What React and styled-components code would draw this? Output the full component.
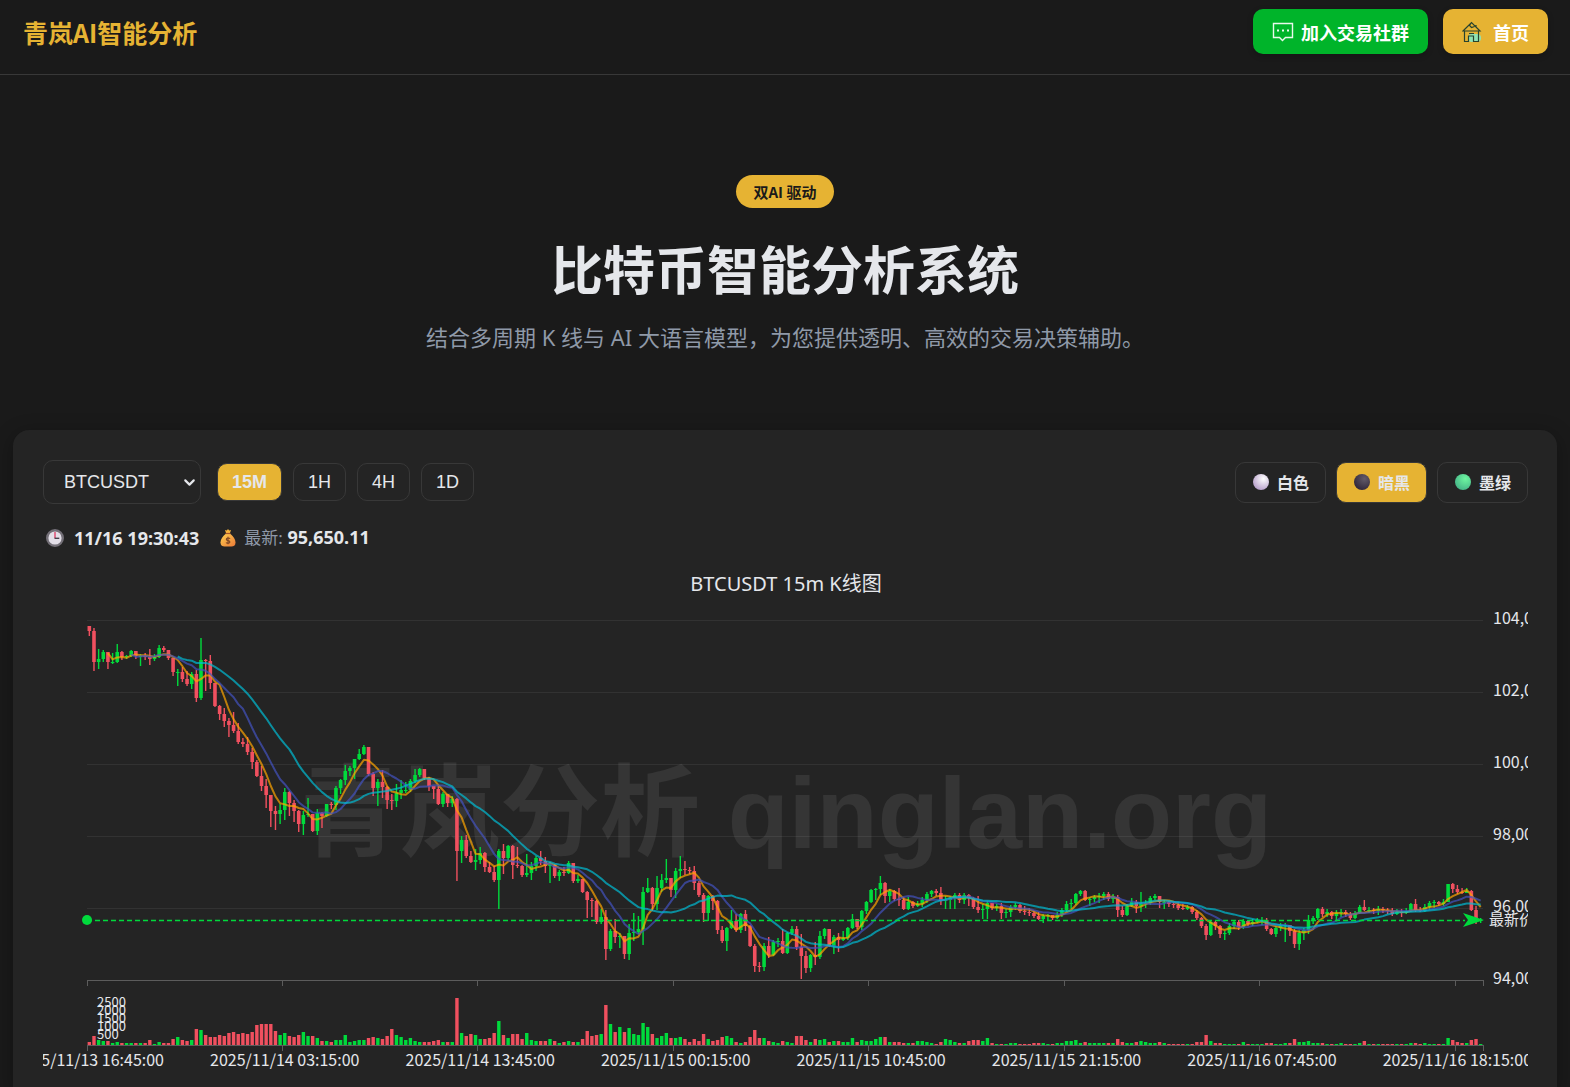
import React, {useState} from 'react'
import styled, {createGlobalStyle} from 'styled-components'
import {ChevronDown} from 'lucide-react'

const gold = '#e6b333'
const green = '#00da3c'
const red = '#f0505f'
const ink = '#e5e7eb'
const muted = '#8f99a8'
const line = '#383838'
const sans = '"Noto Sans", "Noto Sans CJK SC", sans-serif'
const cjk = '"Noto Sans CJK SC", sans-serif'
const arial = '"Liberation Sans", "Noto Sans CJK SC", sans-serif'

const GlobalStyle = createGlobalStyle`
  * {
    box-sizing: border-box;
  }
  body {
    margin: 0;
    background: #1a1a1a;
    color: ${ink};
    font-family: ${sans};
  }
`

const Header = styled.header`
  display: flex;
  align-items: center;
  justify-content: space-between;
  padding: 9px 22px 20px 23px;
  border-bottom: 1px solid ${line};
`
const Logo = styled.div`
  color: ${gold};
  font-family: ${cjk};
  font-size: 25px;
  line-height: 36px;
  font-weight: 700;
`
const Nav = styled.nav`
  display: flex;
  gap: 15px;
`
const NavLink = styled.a`
  display: flex;
  align-items: center;
  gap: ${({$gap}) => $gap}px;
  height: 45px;
  padding: 0 19px;
  border-radius: 10px;
  background: ${({$bg}) => $bg};
  color: #fff;
  font-size: 18px;
  font-weight: 700;
  text-decoration: none;
  box-shadow: 0 2px 6px rgba(0, 0, 0, 0.2);
`

const Hero = styled.section`
  display: flex;
  flex-direction: column;
  align-items: center;
  padding: 100px 20px 77px;
  text-align: center;
`
const Badge = styled.span`
  padding: 0 18px;
  border-radius: 20px;
  background: ${gold};
  color: #1a1a1a;
  font-family: ${cjk};
  font-size: 15px;
  line-height: 33px;
  font-weight: 700;
`
const Title = styled.h1`
  margin: 24px 0 0;
  font-size: 52px;
  line-height: 76px;
  font-weight: 700;
`
const Subtitle = styled.p`
  margin: 13px 0 0;
  color: ${muted};
  font-size: 22px;
  line-height: 32px;
`

const Card = styled.main`
  margin: 0 13px;
  padding: 30px 29px 0 30px;
  border-radius: 16px 16px 0 0;
  background: #242424;
  box-shadow: 0 4px 20px rgba(0, 0, 0, 0.3);
`
const Toolbar = styled.div`
  display: flex;
  align-items: center;
  justify-content: space-between;
`
const Controls = styled.div`
  display: flex;
  align-items: center;
  gap: 16px;
`
const Group = styled.div`
  display: flex;
  gap: ${({$gap}) => $gap}px;
`
const SelectBox = styled.div`
  position: relative;
  color: ${ink};

  svg {
    position: absolute;
    top: 14px;
    right: 3px;
    pointer-events: none;
  }
`
const SymbolSelect = styled.select`
  display: block;
  appearance: none;
  width: 158px;
  height: 44px;
  padding: 0 20px;
  border: 1px solid ${line};
  border-radius: 10px;
  background: #242424;
  color: ${ink};
  font-family: ${arial};
  font-size: 18px;
`
const IntervalButton = styled.button`
  height: 38px;
  padding: 0 14px;
  border: 1px solid ${line};
  border-radius: 10px;
  background: ${({$active}) => $active ? gold : 'transparent'};
  color: ${ink};
  font-family: ${arial};
  font-size: 18px;
  font-weight: ${({$active}) => $active ? 700 : 400};
`
const ThemeButton = styled.button`
  display: flex;
  align-items: center;
  gap: 8px;
  height: 41px;
  padding: 0 16px 0 17px;
  border: 1px solid ${line};
  border-radius: 10px;
  background: ${({$active}) => $active ? gold : 'transparent'};
  color: ${ink};
  font-family: ${arial};
  font-size: 16px;
  font-weight: 700;
`
const Status = styled.div`
  display: flex;
  align-items: center;
  gap: 21px;
  margin-top: 20px;
  padding-left: 3px;
  font-size: 18px;
  line-height: 26px;
`
const StatusItem = styled.span`
  display: flex;
  align-items: center;
  gap: ${({$gap}) => $gap}px;
`
const Label = styled.span`
  color: ${muted};
  font-size: 17px;
`
const ChartSvg = styled.svg`
  display: block;
  width: 100%;
  margin-top: 12px;
  overflow: hidden;
  font-family: ${cjk};
`

// [close, high, low, volume] on the plot's own scale, 0 is the 104,000 line and 360 the 94,000 one
const candles = [
  [11,6,16,3],[42,8,51,9],[39,29,49,5],[32,30,42,4],[42,32,49,4],[42,33,44,2],[32,24,43,3],[37,31,40,2],[36,35,39,2],[31,30,37,2],
  [36,31,39,2],[36,34,46,2],[37,33,40,2],[39,29,45,5],[37,34,41,1],[28,25,38,3],[30,26,32,2],[38,30,40,2],[52,38,56,6],[52,49,66,8],
  [59,47,62,5],[64,51,66,4],[54,52,69,5],[78,50,82,16],[40,18,80,15],[41,39,71,10],[63,35,69,8],[86,63,87,8],[94,85,100,10],[101,88,107,9],
  [105,98,117,12],[111,92,113,13],[122,103,124,11],[124,118,127,12],[132,117,135,11],[142,128,149,13],[156,140,157,20],[166,146,171,21],[175,159,188,21],[191,175,207,21],
  [194,186,210,14],[190,184,204,10],[172,168,200,12],[183,171,196,9],[191,180,202,8],[204,190,212,10],[195,191,215,13],[194,178,197,9],[211,194,212,9],[193,189,215,7],
  [196,192,208,4],[184,184,197,4],[185,182,189,3],[168,166,190,5],[160,159,174,5],[151,145,165,10],[148,146,156,3],[139,139,159,4],[134,129,140,5],[127,125,135,5],
  [154,127,156,7],[168,152,176,8],[162,159,186,7],[167,150,178,6],[180,166,189,9],[181,174,190,16],[173,164,187,10],[170,160,179,8],[170,162,173,5],[161,159,172,7],
  [155,149,163,4],[149,148,157,3],[158,149,160,3],[166,157,171,3],[169,166,179,4],[184,166,185,5],[174,172,187,3],[183,174,187,3],[179,176,187,3],[231,178,261,47],
  [220,216,243,12],[236,215,238,9],[242,231,243,11],[240,229,250,10],[233,227,244,6],[247,232,252,6],[252,242,253,7],[260,246,262,12],[231,229,289,24],[238,224,254,10],
  [226,225,240,7],[245,225,259,11],[246,227,248,11],[255,245,257,6],[253,234,257,12],[246,242,260,5],[238,236,251,4],[241,231,245,4],[246,237,253,4],[245,242,263,6],
  [256,244,258,4],[252,250,261,2],[253,247,256,3],[243,241,254,4],[261,243,263,3],[259,255,263,3],[272,259,273,6],[280,271,298,14],[281,278,297,9],[302,280,304,10],
  [297,289,304,11],[329,290,340,40],[311,309,331,21],[317,299,323,13],[316,313,328,18],[334,316,339,13],[313,304,340,17],[312,293,321,11],[309,296,314,10],[272,267,325,22],
  [268,258,273,18],[284,267,291,11],[268,256,290,7],[260,254,272,9],[258,239,263,12],[270,258,277,7],[251,248,278,7],[249,236,258,8],[250,241,255,6],[251,247,254,3],
  [263,246,270,6],[275,261,277,4],[293,273,302,11],[276,275,301,6],[281,275,290,4],[310,280,314,5],[321,306,323,8],[308,307,331,9],[301,290,309,7],[310,294,312,3],
  [294,293,313,2],[306,290,311,3],[326,305,327,8],[346,324,352,15],[347,342,352,7],[326,323,351,7],[335,317,338,4],[322,320,336,3],[321,318,327,2],[333,309,334,4],
  [313,312,334,3],[309,306,315,2],[327,306,330,9],[336,314,359,9],[348,331,353,5],[335,334,352,3],[337,322,345,6],[316,311,339,5],[309,308,319,6],[326,309,327,3],
  [317,315,334,4],[320,313,332,4],[318,311,321,3],[308,307,320,3],[299,294,309,7],[307,299,309,3],[291,290,310,5],[282,281,294,4],[270,269,283,4],[269,268,280,6],
  [263,256,275,8],[276,262,283,8],[271,269,282,3],[279,270,281,3],[280,268,286,3],[289,277,290,2],[282,277,290,2],[286,281,288,2],[284,281,287,4],[280,277,287,4],
  [274,272,283,3],[271,270,277,2],[273,269,276,1],[281,267,285,3],[280,276,289,6],[278,276,289,5],[275,273,289,3],[280,273,283,2],[275,273,284,2],[278,274,286,4],
  [287,277,289,5],[290,276,293,5],[289,284,299,4],[283,281,299,7],[288,283,290,2],[286,284,291,1],[293,283,299,1],[292,289,298,1],[287,285,297,2],[285,283,290,2],
  [291,284,293,1],[292,286,295,1],[293,288,296,1],[296,291,298,2],[299,292,300,2],[296,294,303,2],[295,294,300,1],[298,295,300,1],[295,292,299,2],[290,288,297,2],
  [284,281,292,4],[283,279,289,4],[274,273,285,5],[271,270,276,2],[280,270,281,3],[279,277,286,2],[277,275,282,2],[276,273,283,2],[274,272,280,2],[279,272,281,2],
  [277,274,283,2],[290,275,297,6],[295,286,297,3],[286,284,296,2],[282,278,287,2],[286,280,293,3],[284,272,292,4],[283,280,288,3],[278,276,285,2],[276,274,280,2],
  [282,276,288,3],[282,280,289,2],[284,281,287,1],[285,282,288,1],[288,282,290,1],[289,284,290,1],[287,285,290,1],[292,286,294,1],[298,290,300,3],[306,297,308,3],
  [315,304,320,10],[302,300,316,4],[306,301,310,2],[314,305,318,2],[313,311,320,1],[306,303,315,1],[302,300,309,1],[307,300,310,1],[301,299,309,3],[304,300,306,1],
  [302,299,306,1],[300,298,303,1],[300,297,305,1],[309,298,311,2],[314,308,315,2],[308,306,317,1],[306,303,311,1],[305,303,322,2],[311,306,316,2],[324,309,328,6],
  [313,310,330,3],[310,308,320,3],[300,295,314,4],[298,296,304,2],[289,288,300,2],[294,287,297,2],[292,289,297,1],[296,291,299,1],[293,290,300,1],[292,289,297,2],
  [294,290,297,1],[298,292,300,1],[293,291,299,1],[287,285,294,2],[290,280,291,4],[290,287,293,1],[291,288,294,1],[289,286,295,1],[290,287,293,1],[291,288,294,1],
  [294,288,296,1],[292,289,295,1],[293,289,297,1],[291,288,294,1],[284,283,292,2],[290,279,292,2],[291,287,292,1],[287,284,292,2],[283,281,290,1],[282,280,288,1],
  [284,281,286,1],[282,279,286,1],[264,264,281,7],[269,263,273,5],[272,265,274,3],[273,268,274,2],[271,268,273,2],[290,270,291,5],[301,286,304,6],[300,298,303,1]
]

const plotWidth = 1396
const step = plotWidth / candles.length
const centre = i => (i + 0.5) * step
const openOf = i => i === 0 ? 6 : candles[i - 1][0]
const isUp = i => candles[i][0] <= openOf(i)

const average = n => candles
  .map((_, i) => i < n - 1 ? null : [
    centre(i),
    candles.slice(i - n + 1, i + 1).reduce((sum, c) => sum + c[0], 0) / n
  ])
  .filter(Boolean)
  .map(([x, y]) => `${x.toFixed(1)},${y.toFixed(1)}`)
  .join(' ')

const averages = [
  {n: 5, color: '#ffa500'},
  {n: 10, color: '#4353c0'},
  {n: 20, color: '#00bcd4'}
]
const prices = ['104,000', '102,000', '100,000', '98,000', '96,000', '94,000']
const volumes = ['500', '1000', '1500', '2000', '2500']
const times = [
  '2025/11/13 16:45:00',
  '2025/11/14 03:15:00',
  '2025/11/14 13:45:00',
  '2025/11/15 00:15:00',
  '2025/11/15 10:45:00',
  '2025/11/15 21:15:00',
  '2025/11/16 07:45:00',
  '2025/11/16 18:15:00'
]

const Axis = ({y}) => (
  <g stroke="#5c5c5c" shapeRendering="crispEdges">
    <path d={`M0 ${y}H${plotWidth}M${plotWidth} ${y}v6`} fill="none" />
    {times.map((t, i) => (
      <line key={t} x1={i * 42 * step} x2={i * 42 * step} y1={y} y2={y + 6} />
    ))}
  </g>
)

const Chart = () => (
  <ChartSvg viewBox="0 0 1485 525" role="img" aria-label="BTCUSDT 15m K线图">
    <text x="743" y="28" textAnchor="middle" fontSize="20" fontFamily={sans} fill={ink}>BTCUSDT 15m K线图</text>
    <g transform="translate(44 57)">
      {prices.slice(0, 5).map((p, i) => (
        <line key={p} x1="0" x2={plotWidth} y1={i * 72} y2={i * 72} stroke="#323232" shapeRendering="crispEdges" />
      ))}
      <text x="699" y="228" textAnchor="middle" fontSize="100" fontWeight="700" fontFamily={arial} fill="#fff" fillOpacity="0.08">
        青岚分析 qinglan.org
      </text>
      {candles.map(([close, high, low], i) => {
        const open = openOf(i)
        const top = Math.min(open, close)
        const color = isUp(i) ? green : red
        return (
          <g key={i} fill={color}>
            <rect x={centre(i) - 0.7} y={high} width="1.4" height={low - high} />
            <rect x={centre(i) - 1.8} y={top} width="3.6" height={Math.max(1, Math.abs(open - close))} />
          </g>
        )
      })}
      {averages.map(({n, color}) => (
        <polyline key={n} points={average(n)} fill="none" stroke={color} strokeWidth="2" strokeLinejoin="round" opacity="0.7" />
      ))}
      <path d="M0 300.500H1378" stroke={green} strokeWidth="1.300" strokeDasharray="5 3" />
      <circle cx="0" cy="300" r="5" fill={green} />
      <path d="M1376 293l21 7-21 7 5-7z" fill={green} />
      <Axis y={360} />
      {prices.map((p, i) => (
        <text key={p} x="1406" y={i * 72 + 4} fontSize="16" fill={ink}>{p}</text>
      ))}
      <text x="1402" y="305" fontSize="15" fill={ink}>最新价</text>
      {candles.map((c, i) => (
        <rect key={i} x={centre(i) - 1.7} y={425 - c[3]} width="3.4" height={c[3]} fill={isUp(i) ? green : red} />
      ))}
      <Axis y={425} />
      {volumes.map((v, i) => (
        <text key={v} x="10" y={419 - i * 8} fontSize="13" fill={ink}>{v}</text>
      ))}
      {times.map((t, i) => (
        <text key={t} x={centre(i * 42)} y="446" textAnchor="middle" fontSize="16" fill={ink}>{t}</text>
      ))}
    </g>
  </ChartSvg>
)

const ChatIcon = () => (
  <svg width="22" height="20" viewBox="0 0 22 20" fill="none" stroke="#e9f9ec" strokeWidth="1.4" aria-hidden="true">
    <path d="M1.5 1.5h19v14h-7l-3 3-3-3h-6z" />
    <path d="M5 8.500h2M10 8.500h2M15 8.500h2" strokeWidth="1.8" />
  </svg>
)

const HouseIcon = () => (
  <svg width="20" height="22" viewBox="0 0 20 22" fill="none" aria-hidden="true">
    <rect x="6" y="13" width="13" height="8" rx="4" fill="#8fe3b4" />
    <path d="M1 10l8.500-8.500L18 10zM2.500 10v10.500h4v-5.500h5v5.500h5V10M7 12.500h5M9.500 1.500l-2 3 2 2 3-1M14 4v2" stroke="#29432e" strokeWidth="1.2" />
  </svg>
)

const ClockIcon = () => (
  <svg width="18" height="18" viewBox="0 0 18 18" fill="none" aria-hidden="true">
    <circle cx="9" cy="9" r="7.800" fill="#e3dfe8" stroke="#747078" strokeWidth="2.400" />
    <path d="M9 3v6" stroke="#e0446c" strokeWidth="1.400" />
    <path d="M8.500 9.300h4.800" stroke="#45404b" strokeWidth="1.400" />
  </svg>
)

const MoneyBagIcon = () => (
  <svg width="16" height="18" viewBox="0 0 16 18" aria-hidden="true">
    <defs>
      <linearGradient id="bag" x1="0" y1="0" x2="1" y2="1">
        <stop offset="0" stopColor="#ffd251" />
        <stop offset="1" stopColor="#ea7837" />
      </linearGradient>
    </defs>
    <path d="M8 0l1.200 1.400L11 1l-1 3H6L5 1l1.800.400z" fill="#f8b53d" />
    <path d="M5.500 5h5C13 7 15.500 10 15.500 13.500c0 3-2 4-4 4h-7c-2 0-4-1-4-4C.500 10 3 7 5.500 5z" fill="url(#bag)" />
    <path d="M5.500 4.500h5" stroke="#a8542a" strokeWidth="1.200" />
    <path d="M10 9.700c-.400-.900-3.700-1-3.700.700 0 1.600 3.600.900 3.600 2.500 0 1.700-3.300 1.600-3.800.500M8 7.800v7.400" fill="none" stroke="#7d4523" strokeWidth="1.100" />
  </svg>
)

const Ball = ({id, colors}) => (
  <svg width="16" height="16" viewBox="0 0 16 16" aria-hidden="true">
    <defs>
      <radialGradient id={id} cx="0.65" cy="0.3" r="0.75">
        <stop offset="0" stopColor={colors[0]} />
        <stop offset="1" stopColor={colors[1]} />
      </radialGradient>
    </defs>
    <circle cx="8" cy="8" r="8" fill={`url(#${id})`} />
  </svg>
)

const intervals = ['15M', '1H', '4H', '1D']
const themes = [
  {id: 'white', name: '白色', colors: ['#ffffff', '#b79fcb']},
  {id: 'dark', name: '暗黑', colors: ['#625b69', '#30263a']},
  {id: 'green', name: '墨绿', colors: ['#6ef5a0', '#46b588']}
]

const App = () => {
  const [interval, setInterval] = useState('15M')
  const [theme, setTheme] = useState('dark')
  return (
    <>
      <GlobalStyle />
      <Header>
        <Logo>青岚AI智能分析</Logo>
        <Nav>
          <NavLink href="#community" $bg="#00b42a" $gap={7}><ChatIcon />加入交易社群</NavLink>
          <NavLink href="#home" $bg={gold} $gap={11}><HouseIcon />首页</NavLink>
        </Nav>
      </Header>
      <Hero>
        <Badge>双AI 驱动</Badge>
        <Title>比特币智能分析系统</Title>
        <Subtitle>结合多周期 K 线与 AI 大语言模型，为您提供透明、高效的交易决策辅助。</Subtitle>
      </Hero>
      <Card>
        <Toolbar>
          <Controls>
            <SelectBox>
              <SymbolSelect aria-label="交易对" defaultValue="BTCUSDT">
                <option>BTCUSDT</option>
              </SymbolSelect>
              <ChevronDown size={17} strokeWidth={3} aria-hidden="true" />
            </SelectBox>
            <Group $gap={11}>
              {intervals.map(name => (
                <IntervalButton key={name} type="button" $active={name === interval} onClick={() => setInterval(name)}>
                  {name}
                </IntervalButton>
              ))}
            </Group>
          </Controls>
          <Group $gap={10}>
            {themes.map(({id, name, colors}) => (
              <ThemeButton key={id} type="button" $active={id === theme} onClick={() => setTheme(id)}>
                <Ball id={id} colors={colors} />
                {name}
              </ThemeButton>
            ))}
          </Group>
        </Toolbar>
        <Status>
          <StatusItem $gap={10}>
            <ClockIcon />
            <strong>11/16 19:30:43</strong>
          </StatusItem>
          <StatusItem $gap={8}>
            <MoneyBagIcon />
            <span><Label>最新:</Label> <strong>95,650.11</strong></span>
          </StatusItem>
        </Status>
        <Chart />
      </Card>
    </>
  )
}

export default App
